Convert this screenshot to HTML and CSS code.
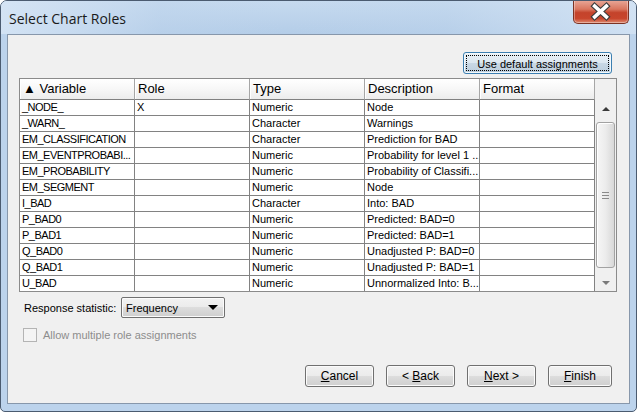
FILE: index.html
```html
<!DOCTYPE html>
<html lang="en">
<head>
    <meta charset="UTF-8">
    <title>Select Chart Roles</title>
    <link rel="stylesheet" href="styles.css">
</head>
<body>
<div class="window">
    <div class="titlebar">
        <span class="title">Select Chart Roles</span>
        <div class="close">
            <svg width="56" height="24" viewBox="0 0 56 24">
                <path d="M22 7 L34 18 M34 7 L22 18" stroke="#3b3b3b" stroke-width="6" stroke-linecap="square" fill="none"/>
                <path d="M22 7 L34 18 M34 7 L22 18" stroke="#ffffff" stroke-width="3.6" stroke-linecap="square" fill="none"/>
            </svg>
        </div>
    </div>

    <div class="client">
        <div class="top-row">
            <button type="button" class="btn default"><span class="focus">Use default assignments</span></button>
        </div>

        <div class="scrollpane">
            <table class="roles">
                <thead>
                    <tr><th>&#9650; Variable</th><th>Role</th><th>Type</th><th>Description</th><th>Format</th></tr>
                </thead>
                <tbody>
                    <tr><td>_NODE_</td><td>X</td><td>Numeric</td><td>Node</td><td></td></tr>
                    <tr><td>_WARN_</td><td></td><td>Character</td><td>Warnings</td><td></td></tr>
                    <tr><td>EM_CLASSIFICATION</td><td></td><td>Character</td><td>Prediction for BAD</td><td></td></tr>
                    <tr><td>EM_EVENTPROBABI...</td><td></td><td>Numeric</td><td>Probability for level 1 ...</td><td></td></tr>
                    <tr><td>EM_PROBABILITY</td><td></td><td>Numeric</td><td>Probability of Classifi...</td><td></td></tr>
                    <tr><td>EM_SEGMENT</td><td></td><td>Numeric</td><td>Node</td><td></td></tr>
                    <tr><td>I_BAD</td><td></td><td>Character</td><td>Into: BAD</td><td></td></tr>
                    <tr><td>P_BAD0</td><td></td><td>Numeric</td><td>Predicted: BAD=0</td><td></td></tr>
                    <tr><td>P_BAD1</td><td></td><td>Numeric</td><td>Predicted: BAD=1</td><td></td></tr>
                    <tr><td>Q_BAD0</td><td></td><td>Numeric</td><td>Unadjusted P: BAD=0</td><td></td></tr>
                    <tr><td>Q_BAD1</td><td></td><td>Numeric</td><td>Unadjusted P: BAD=1</td><td></td></tr>
                    <tr><td>U_BAD</td><td></td><td>Numeric</td><td>Unnormalized Into: B...</td><td></td></tr>
                </tbody>
            </table>
            <div class="vscroll">
                <div class="corner"></div>
                <div class="arrow-btn"><span class="tri-up"></span></div>
                <div class="track">
                    <div class="thumb"><span class="grip"></span></div>
                </div>
                <div class="arrow-btn"><span class="tri-down"></span></div>
            </div>
        </div>

        <div class="stat-row">
            <label for="stat">Response statistic:</label>
            <div class="combo" id="stat">
                <span>Frequency</span>
                <span class="combo-arrow"></span>
            </div>
        </div>

        <div class="check-row">
            <span class="checkbox"></span>
            <span>Allow multiple role assignments</span>
        </div>

        <div class="nav-row">
            <button type="button" class="btn"><u>C</u>ancel</button>
            <button type="button" class="btn">&lt; <u>B</u>ack</button>
            <button type="button" class="btn"><u>N</u>ext &gt;</button>
            <button type="button" class="btn finish"><u>F</u>inish</button>
        </div>
    </div>
</div>
</body>
</html>
```

FILE: styles.css
```css
body { margin: 0; background: #ffffff; font-family: "Liberation Sans", Arial, sans-serif; }

.window {
    width: 637px;
    height: 412px;
    box-sizing: border-box;
    border: 1px solid #4b5b70;
    border-radius: 7px 7px 5px 5px;
    background: #bcd3ec;
    display: flex;
    flex-direction: column;
    overflow: hidden;
}

/* title bar */
.titlebar {
    height: 33px;
    flex: none;
    display: flex;
    justify-content: space-between;
    align-items: flex-start;
    background:
        linear-gradient(90deg, rgba(214,229,245,0.9) 0%, rgba(190,212,236,0.4) 25%, rgba(169,196,224,0.0) 45%, rgba(190,212,236,0.3) 70%, rgba(214,229,245,0.8) 100%),
        linear-gradient(#c6daef, #b4cde8);
}
.title {
    margin: 8px 0 0 8px;
    font-family: "Open Sans", "Noto Sans", sans-serif;
    font-size: 14px;
    color: #1a1a1a;
}
.close {
    width: 56px;
    height: 24px;
    margin: -1px 7px 0 0;
    box-sizing: border-box;
    border: 1px solid #7c3324;
    border-top: none;
    border-radius: 0 0 5px 5px;
    background: linear-gradient(#e9a99a 0%, #d9765f 40%, #c4432b 55%, #c8452c 80%, #de8a70 100%);
    box-shadow: inset 0 0 0 1px rgba(255,255,255,0.35);
    display: flex;
}
.close svg { margin: -1px 0 0 -1px; }

/* dialog body */
.client {
    flex: 1;
    margin: 0 6px 7px 6px;
    border: 1px solid #8797ab;
    background: #f0f0f0;
    display: flex;
    flex-direction: column;
}

.top-row { display: flex; justify-content: flex-end; padding: 17px 17px 0 0; }

.btn {
    height: 22px;
    width: 69px;
    padding: 0;
    font-family: "Liberation Sans", Arial, sans-serif;
    font-size: 12px;
    color: #000;
    border: 1px solid #707070;
    border-radius: 3px;
    background: linear-gradient(#f2f2f2 0%, #ebebeb 50%, #dddddd 50%, #cfcfcf 100%);
    box-shadow: inset 0 0 0 1px #fbfbfb;
}
.btn.finish { width: 64px; }
.btn.default {
    width: 149px;
    font-size: 11px;
    border-color: #3c7fb1;
    background: linear-gradient(#e8f0f6 0%, #dce7f0 50%, #c9d8e5 50%, #bccedd 100%);
    box-shadow: inset 0 0 0 1px #f4f9fc;
    padding: 2px;
}
.btn.default .focus {
    display: block;
    height: 16px;
    line-height: 16px;
    border: 1px dotted #000;
    box-sizing: border-box;
}

/* table */
.scrollpane {
    display: flex;
    margin: 4px 0 0 11px;
    width: 598px;
    box-sizing: border-box;
    border: 1px solid #8b8b8b;
}
.roles {
    width: 575px;
    table-layout: fixed;
    border-collapse: separate;
    border-spacing: 0;
}
.roles th {
    width: 115px;
    box-sizing: border-box;
    padding: 0 3px;
    line-height: 20px;
    text-align: left;
    font-weight: normal;
    font-size: 13px;
    border-right: 1px solid #a6a6a6;
    border-bottom: 1px solid #808080;
    background: linear-gradient(#ffffff 0%, #f7f7f7 50%, #ececec 100%);
    box-shadow: inset 1px 1px 0 #ffffff;
}
.roles td {
    padding: 0 2px;
    line-height: 15px;
    height: 15px;
    font-size: 11px;
    white-space: nowrap;
    overflow: hidden;
    background: #ffffff;
    border-right: 1px solid #828282;
    border-bottom: 1px solid #828282;
}
.roles td:first-child { letter-spacing: -0.5px; }
.roles tr:last-child td { border-bottom: none; }

.vscroll {
    width: 21px;
    display: flex;
    flex-direction: column;
    background: #f0f0f0;
}
.corner { height: 21px; }
.arrow-btn { height: 17px; display: flex; align-items: center; justify-content: center; }
.tri-up {
    width: 0; height: 0;
    border-left: 4px solid transparent;
    border-right: 4px solid transparent;
    border-bottom: 4px solid #3a3a3a;
}
.tri-down {
    width: 0; height: 0;
    border-left: 4px solid transparent;
    border-right: 4px solid transparent;
    border-top: 4px solid #7a7a7a;
}
.track { flex: 1; display: flex; padding: 5px 1px 6px 1px; }
.thumb {
    flex: 1;
    border: 1px solid #a2a2a2;
    border-radius: 3px;
    background: linear-gradient(90deg, #f6f6f6 0%, #ececec 50%, #d8d8d8 100%);
    box-shadow: inset 1px 1px 0 #ffffff;
    display: flex;
    align-items: center;
    justify-content: center;
}
.grip {
    width: 7px;
    height: 7px;
    background: repeating-linear-gradient(#8a8a8a 0 1px, transparent 1px 3px);
}

/* lower controls */
.stat-row {
    display: flex;
    align-items: center;
    margin-top: 5px;
    padding-left: 16px;
    font-size: 11px;
}
.stat-row label { width: 97px; }
.combo {
    width: 104px;
    height: 21px;
    box-sizing: border-box;
    border: 1px solid #707070;
    border-radius: 2px;
    background: linear-gradient(#f2f2f2 0%, #ebebeb 50%, #dddddd 50%, #cfcfcf 100%);
    box-shadow: inset 0 0 0 1px #fbfbfb;
    display: flex;
    align-items: center;
    justify-content: space-between;
    padding: 0 6px 0 4px;
    font-size: 11px;
}
.combo-arrow {
    width: 0; height: 0;
    border-left: 5px solid transparent;
    border-right: 5px solid transparent;
    border-top: 5px solid #000;
}

.check-row {
    display: flex;
    align-items: center;
    gap: 6px;
    margin-top: 10px;
    padding-left: 15px;
    font-size: 11px;
    color: #8d8d8d;
}
.checkbox {
    width: 14px;
    height: 14px;
    box-sizing: border-box;
    border: 1px solid #b4b4b4;
    background: #f4f4f4;
}

.nav-row {
    margin-top: auto;
    display: flex;
    justify-content: flex-end;
    gap: 12px;
    padding: 0 17px 16px 0;
}
```
